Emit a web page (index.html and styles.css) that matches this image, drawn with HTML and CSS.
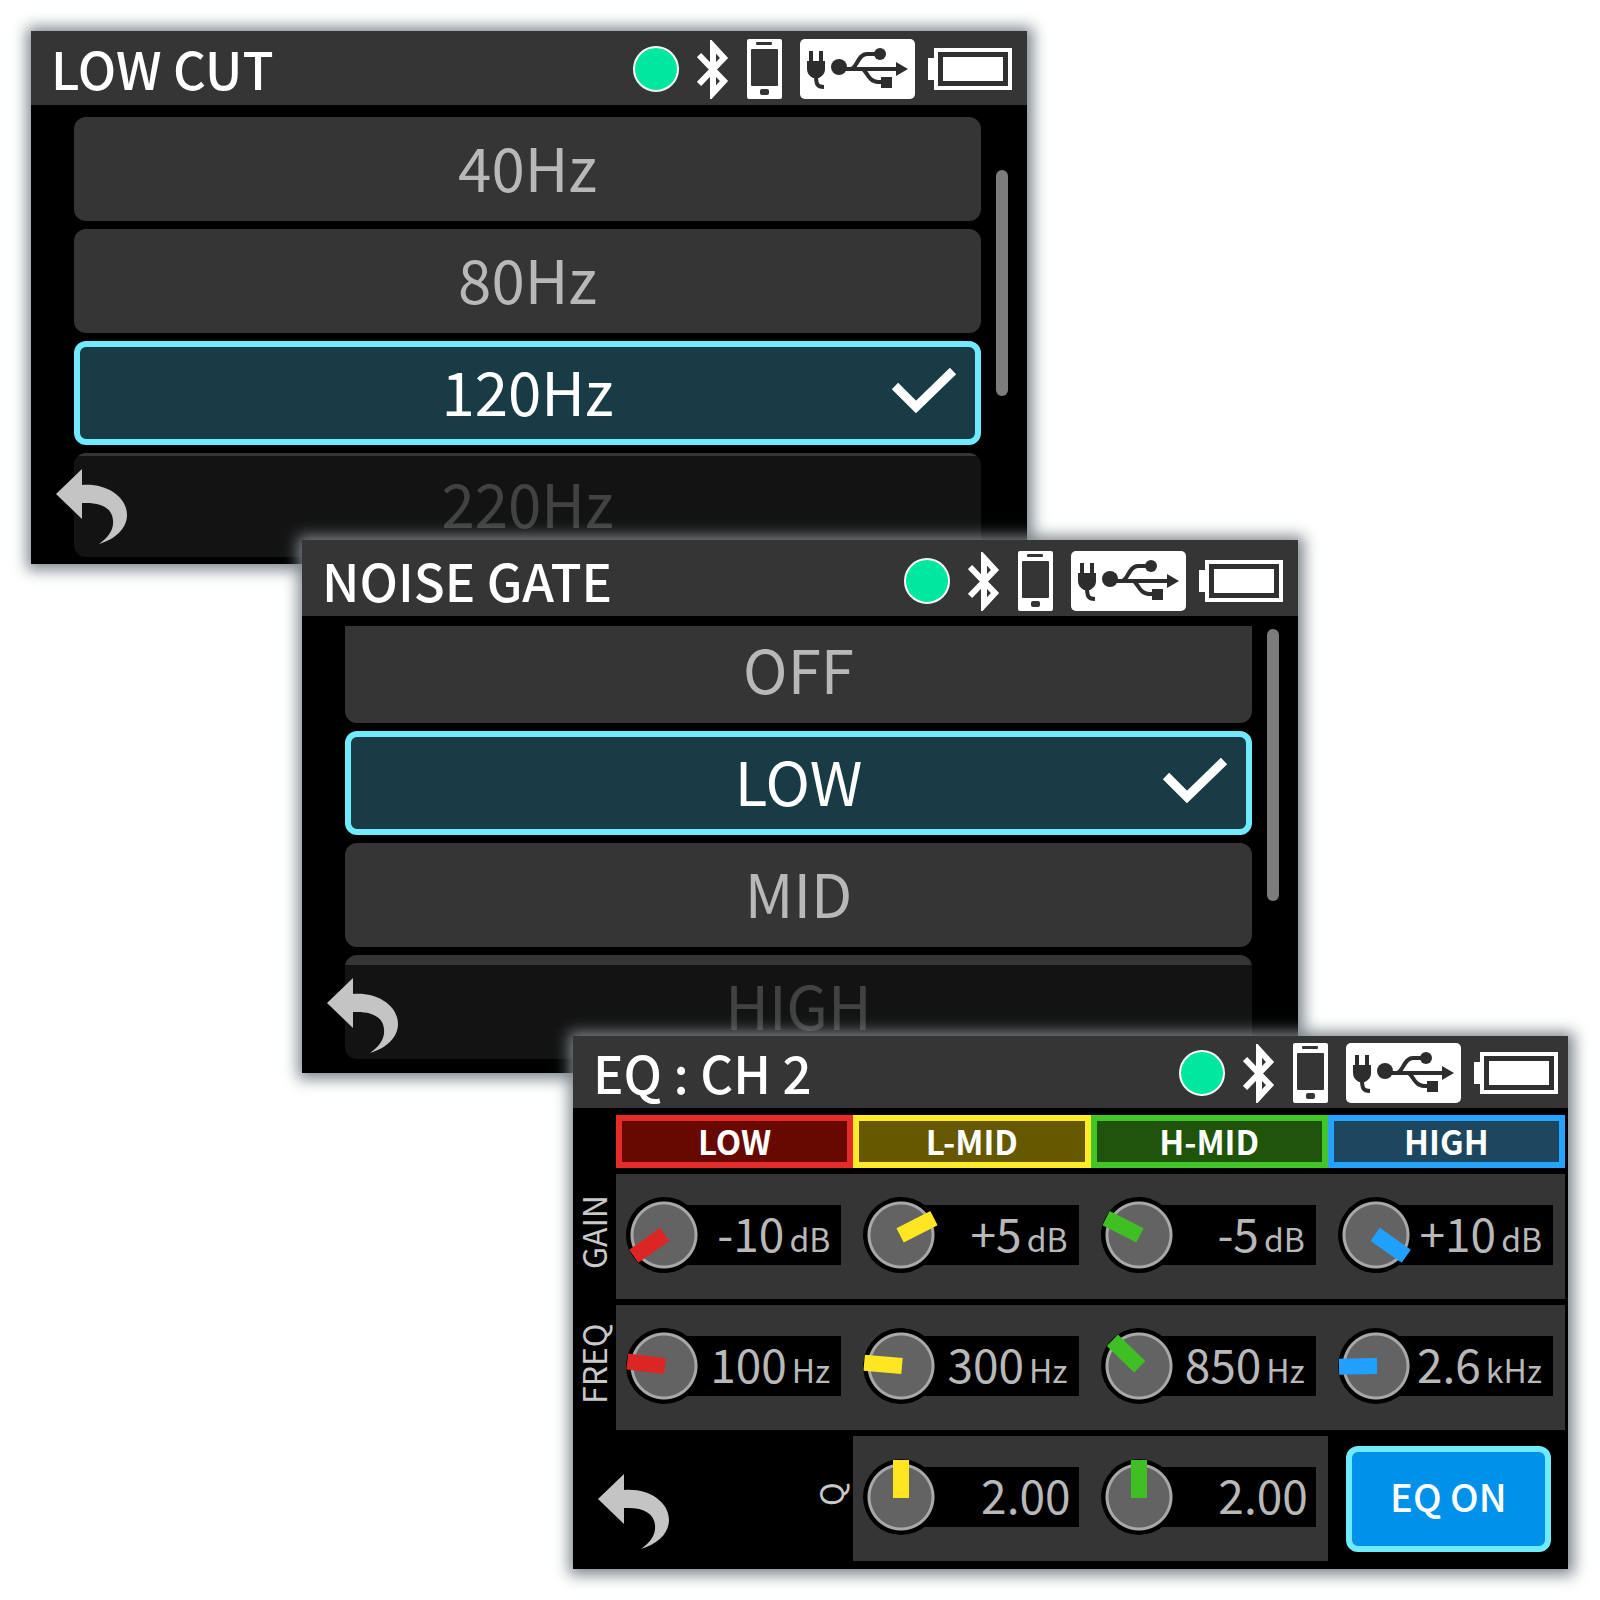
FILE: index.html
```html
<!DOCTYPE html>
<html lang="en">

<head>
    <meta charset="UTF-8">
    <meta name="viewport" content="width=device-width, initial-scale=1.0">
    <title>Channel settings</title>
    <link rel="stylesheet" href="styles.css">
</head>

<body>
    <!-- shared icons -->
    <svg class="sprite" width="0" height="0" aria-hidden="true">
        <symbol id="bluetooth" viewBox="0 0 32 59">
            <path d="M2 15 27 41 16 53V6L27 18 2 44" fill="none" stroke="#fff" stroke-width="6" />
        </symbol>
        <symbol id="phone" viewBox="0 0 35 60">
            <rect width="35" height="60" rx="2" fill="#fff" />
            <rect x="4" y="10" width="27" height="37" rx="1" fill="#353535" />
            <rect x="9" y="3" width="16" height="3" rx="1" fill="#353535" />
            <rect x="13" y="50" width="9" height="6" rx="2" fill="#353535" />
        </symbol>
        <symbol id="usb" viewBox="0 0 115 60">
            <rect width="115" height="60" rx="5" fill="#fff" />
            <g fill="#2d2d2d">
                <path d="M9 12h4v10h6V12h4v10h2v8c0 5-3 7-6 9h-6c-4-2-6-5-6-9v-8h2z" />
                <circle cx="39" cy="28" r="8" />
                <path d="M96 23 108 30 96 37z" />
                <circle cx="80" cy="15" r="6" />
                <rect x="81" y="38" width="11" height="11" />
            </g>
            <g fill="none" stroke="#2d2d2d" stroke-width="4">
                <path d="M16 36c0 9 1 12 8 12" />
                <path d="M39 30H98" />
                <path d="M51 30C57 29 58 15 67 15H80" />
                <path d="M62 30C67 31 68 43 78 43H84" />
            </g>
        </symbol>
        <symbol id="battery" viewBox="0 0 84 42">
            <path d="M6 0H84V42H6V32H0V10H6z" fill="#fff" />
            <path d="M10 4H80V38H10z" fill="#303030" />
            <path d="M15 9H75V33H15z" fill="#fff" />
        </symbol>
        <symbol id="check" viewBox="0 0 66 48">
            <path d="M4 19 25 40 62 4" fill="none" stroke="#fff" stroke-width="9" />
        </symbol>
        <symbol id="back" viewBox="0 0 71 75">
            <path d="M0 25 26 0V16C51 14 71 28 71 46 71 59 60 70 43 75 53 68 58 60 57 51 56 39 45 33 26 34V50z" fill="#c4c4c4" />
        </symbol>
    </svg>

    <main class="stack">
        <section class="screen screen_cut">
            <header class="bar">
                <h2>LOW CUT</h2>
                <div class="status">
                    <i class="dot"></i>
                    <svg width="32" height="59"><use href="#bluetooth" /></svg>
                    <svg width="35" height="60"><use href="#phone" /></svg>
                    <svg width="115" height="60"><use href="#usb" /></svg>
                    <svg class="battery" width="84" height="42"><use href="#battery" /></svg>
                </div>
            </header>
            <div class="content">
                <ul class="options">
                    <li><button type="button">40Hz</button></li>
                    <li><button type="button">80Hz</button></li>
                    <li>
                        <button type="button" class="selected">120Hz
                            <svg class="check" width="66" height="48"><use href="#check" /></svg>
                        </button>
                    </li>
                    <li><button type="button">220Hz</button></li>
                </ul>
                <div class="track"><i class="thumb"></i></div>
            </div>
            <footer class="shade">
                <button type="button" class="btn_back" aria-label="Back">
                    <svg width="71" height="75"><use href="#back" /></svg>
                </button>
            </footer>
        </section>

        <section class="screen screen_gate">
            <header class="bar">
                <h2>NOISE GATE</h2>
                <div class="status">
                    <i class="dot"></i>
                    <svg width="32" height="59"><use href="#bluetooth" /></svg>
                    <svg width="35" height="60"><use href="#phone" /></svg>
                    <svg width="115" height="60"><use href="#usb" /></svg>
                    <svg class="battery" width="84" height="42"><use href="#battery" /></svg>
                </div>
            </header>
            <div class="content">
                <ul class="options">
                    <li><button type="button">OFF</button></li>
                    <li>
                        <button type="button" class="selected">LOW
                            <svg class="check" width="66" height="48"><use href="#check" /></svg>
                        </button>
                    </li>
                    <li><button type="button">MID</button></li>
                    <li><button type="button">HIGH</button></li>
                </ul>
                <div class="track"><i class="thumb"></i></div>
            </div>
            <footer class="shade">
                <button type="button" class="btn_back" aria-label="Back">
                    <svg width="71" height="75"><use href="#back" /></svg>
                </button>
            </footer>
        </section>

        <section class="screen screen_eq">
            <header class="bar">
                <h2>EQ : CH 2</h2>
                <div class="status">
                    <i class="dot"></i>
                    <svg width="32" height="59"><use href="#bluetooth" /></svg>
                    <svg width="35" height="60"><use href="#phone" /></svg>
                    <svg width="115" height="60"><use href="#usb" /></svg>
                    <svg class="battery" width="84" height="42"><use href="#battery" /></svg>
                </div>
            </header>
            <div class="eq">
                <div class="band low">LOW</div>
                <div class="band lmid">L-MID</div>
                <div class="band hmid">H-MID</div>
                <div class="band high">HIGH</div>

                <div class="name">GAIN</div>
                <div class="cell low">
                    <input type="range" class="knob" min="-12" max="12" value="-10" aria-label="Low gain" style="--angle: -125deg">
                    <p class="value">-10<small>dB</small></p>
                </div>
                <div class="cell lmid">
                    <input type="range" class="knob" min="-12" max="12" value="5" aria-label="L-Mid gain" style="--angle: 63deg">
                    <p class="value">+5<small>dB</small></p>
                </div>
                <div class="cell hmid">
                    <input type="range" class="knob" min="-12" max="12" value="-5" aria-label="H-Mid gain" style="--angle: -63deg">
                    <p class="value">-5<small>dB</small></p>
                </div>
                <div class="cell high">
                    <input type="range" class="knob" min="-12" max="12" value="10" aria-label="High gain" style="--angle: 125deg">
                    <p class="value">+10<small>dB</small></p>
                </div>

                <div class="name">FREQ</div>
                <div class="cell low">
                    <input type="range" class="knob" min="20" max="500" value="100" aria-label="Low frequency" style="--angle: -83deg">
                    <p class="value">100<small>Hz</small></p>
                </div>
                <div class="cell lmid">
                    <input type="range" class="knob" min="50" max="2000" value="300" aria-label="L-Mid frequency" style="--angle: -85deg">
                    <p class="value">300<small>Hz</small></p>
                </div>
                <div class="cell hmid">
                    <input type="range" class="knob" min="100" max="8000" value="850" aria-label="H-Mid frequency" style="--angle: -46deg">
                    <p class="value">850<small>Hz</small></p>
                </div>
                <div class="cell high">
                    <input type="range" class="knob" min="500" max="20000" value="2600" aria-label="High frequency" style="--angle: -91deg">
                    <p class="value">2.6<small>kHz</small></p>
                </div>

                <div class="corner">
                    <button type="button" class="btn_back" aria-label="Back">
                        <svg width="71" height="75"><use href="#back" /></svg>
                    </button>
                    <div class="name">Q</div>
                </div>
                <div class="cell lmid">
                    <input type="range" class="knob" min="0" max="4" step="0.01" value="2" aria-label="L-Mid Q" style="--angle: 0deg">
                    <p class="value">2.00</p>
                </div>
                <div class="cell hmid">
                    <input type="range" class="knob" min="0" max="4" step="0.01" value="2" aria-label="H-Mid Q" style="--angle: 0deg">
                    <p class="value">2.00</p>
                </div>
                <button type="button" class="btn_eq" aria-pressed="true">EQ ON</button>
            </div>
        </section>
    </main>
</body>

</html>
```
FILE: styles.css
```css
* {
    margin: 0;
    padding: 0;
    list-style: none;
    box-sizing: border-box;
}

body {
    background: white;
    font-family: "Noto Sans CJK JP", "Noto Sans", sans-serif;
    color: #b8b8b8;
}

button {
    font: inherit;
    color: inherit;
    border: none;
    background: none;
}

svg {
    display: block;
}

.sprite {
    position: absolute;
}

.stack {
    padding: 31px 0;
}

/* screens overlap like cards, each one over the one before */
.screen {
    position: relative;
    background: black;
    box-shadow: 1px 1px 14px 5px #7d878d;
}

.screen_cut {
    margin: 0 573px 0 31px;
}

.screen_gate {
    margin: -24px 302px 0;
}

.screen_eq {
    margin: -37px 32px 0 573px;
}

/* title bar */
.bar {
    display: flex;
    justify-content: space-between;
    padding: 8px 15px 6px 20px;
    background: #353535;
}

.screen_gate .bar {
    padding-top: 11px;
    padding-bottom: 5px;
}

.screen_eq .bar {
    padding: 7px 10px 5px 20px;
}

.bar h2 {
    font-size: 51px;
    line-height: 58px;
    font-weight: 500;
    color: white;
    white-space: nowrap;
}

.status {
    display: flex;
    align-items: center;
    gap: 18px;
    height: 60px;
}

.status .dot {
    width: 46px;
    height: 46px;
    border: 2px solid white;
    border-radius: 50%;
    background: #00e8a0;
}

.status .battery {
    margin-left: -5px;
}

/* option list */
.content {
    display: flex;
    gap: 15px;
    padding: 12px 19px 7px 43px;
}

.screen_gate .content {
    padding-top: 10px;
    padding-bottom: 14px;
}

.options {
    flex: 1;
    display: flex;
    flex-direction: column;
    gap: 8px;
}

.options button {
    display: block;
    position: relative;
    width: 100%;
    height: 104px;
    padding-bottom: 6px;
    border-radius: 12px;
    background: #353535;
    font-size: 60px;
    line-height: 84px;
    text-align: center;
}

/* this list is scrolled by 7px, the first row loses its top */
.screen_gate li:first-child button {
    height: 97px;
    padding-bottom: 13px;
    border-radius: 0 0 12px 12px;
}

.options .selected {
    border: 6px solid #70eaff;
    background: #193b45;
    color: white;
}

.options .check {
    position: absolute;
    right: 18px;
    top: 20px;
}

.track {
    width: 12px;
    padding-top: 53px;
}

.screen_gate .track {
    padding-top: 3px;
}

.thumb {
    display: block;
    height: 226px;
    border-radius: 6px;
    background: #7c7c7c;
}

.screen_gate .thumb {
    height: 272px;
}

.shade {
    position: absolute;
    left: 0;
    right: 0;
    bottom: 0;
    height: 108px;
    padding: 13px 25px;
    background: rgba(0, 0, 0, .64);
}

/* equalizer */
.eq {
    display: grid;
    grid-template-columns: 43px repeat(4, 1fr);
    grid-template-rows: 53px;
    grid-auto-rows: 125px;
    row-gap: 6px;
    padding: 7px 3px 8px 0;
}

.low {
    --color: #dc2626;
    --edge: #e62b2b;
    --fill: #670900;
}

.lmid {
    --color: #ffe620;
    --edge: #ffec28;
    --fill: #665800;
}

.hmid {
    --color: #3fbf24;
    --edge: #42c526;
    --fill: #20540b;
}

.high {
    --color: #20a0ff;
    --edge: #24a4ff;
    --fill: #1c475f;
}

.band {
    border: 6px solid var(--edge);
    background: var(--fill);
    color: white;
    font-size: 33px;
    line-height: 41px;
    font-weight: 700;
    text-align: center;
}

.band.low {
    grid-column: 2;
}

/* turned by half a circle, so top padding lifts the text */
.name {
    display: flex;
    align-items: center;
    justify-content: center;
    writing-mode: vertical-rl;
    transform: rotate(180deg);
    padding: 8px 0 0 3px;
    font-size: 32px;
    line-height: 40px;
    color: #c8c8c8;
}

.cell {
    display: flex;
    align-items: center;
    padding: 0 12px 3px 10px;
    background: #353535;
}

.knob {
    position: relative;
    z-index: 1;
    appearance: none;
    flex: none;
    width: 76px;
    height: 76px;
    border-radius: 50%;
    background:
        linear-gradient(var(--color), var(--color)) 50% 1px / 16px 38px no-repeat,
        radial-gradient(circle, #636363 30px, #a8a8a8 31px, #a8a8a8 33px, black 34px);
    transform: rotate(var(--angle));
}

.knob::-webkit-slider-thumb {
    appearance: none;
    width: 16px;
    height: 16px;
    background: none;
}

.value {
    flex: 1;
    display: flex;
    align-items: baseline;
    justify-content: flex-end;
    gap: 5px;
    height: 60px;
    margin-left: -38px;
    padding-right: 8px;
    background: black;
    font-size: 46px;
    line-height: 54px;
}

.value small {
    padding-right: 3px;
    font-size: 32px;
}

.corner {
    grid-column: span 2;
    display: flex;
    justify-content: space-between;
    padding-left: 25px;
}

.corner .btn_back {
    padding-top: 26px;
}

.btn_eq {
    margin: 10px 14px 9px 18px;
    padding-bottom: 7px;
    border: 6px solid #70eaff;
    border-radius: 12px;
    background: #0091ea;
    color: white;
    font-size: 38px;
    font-weight: 500;
}
```
